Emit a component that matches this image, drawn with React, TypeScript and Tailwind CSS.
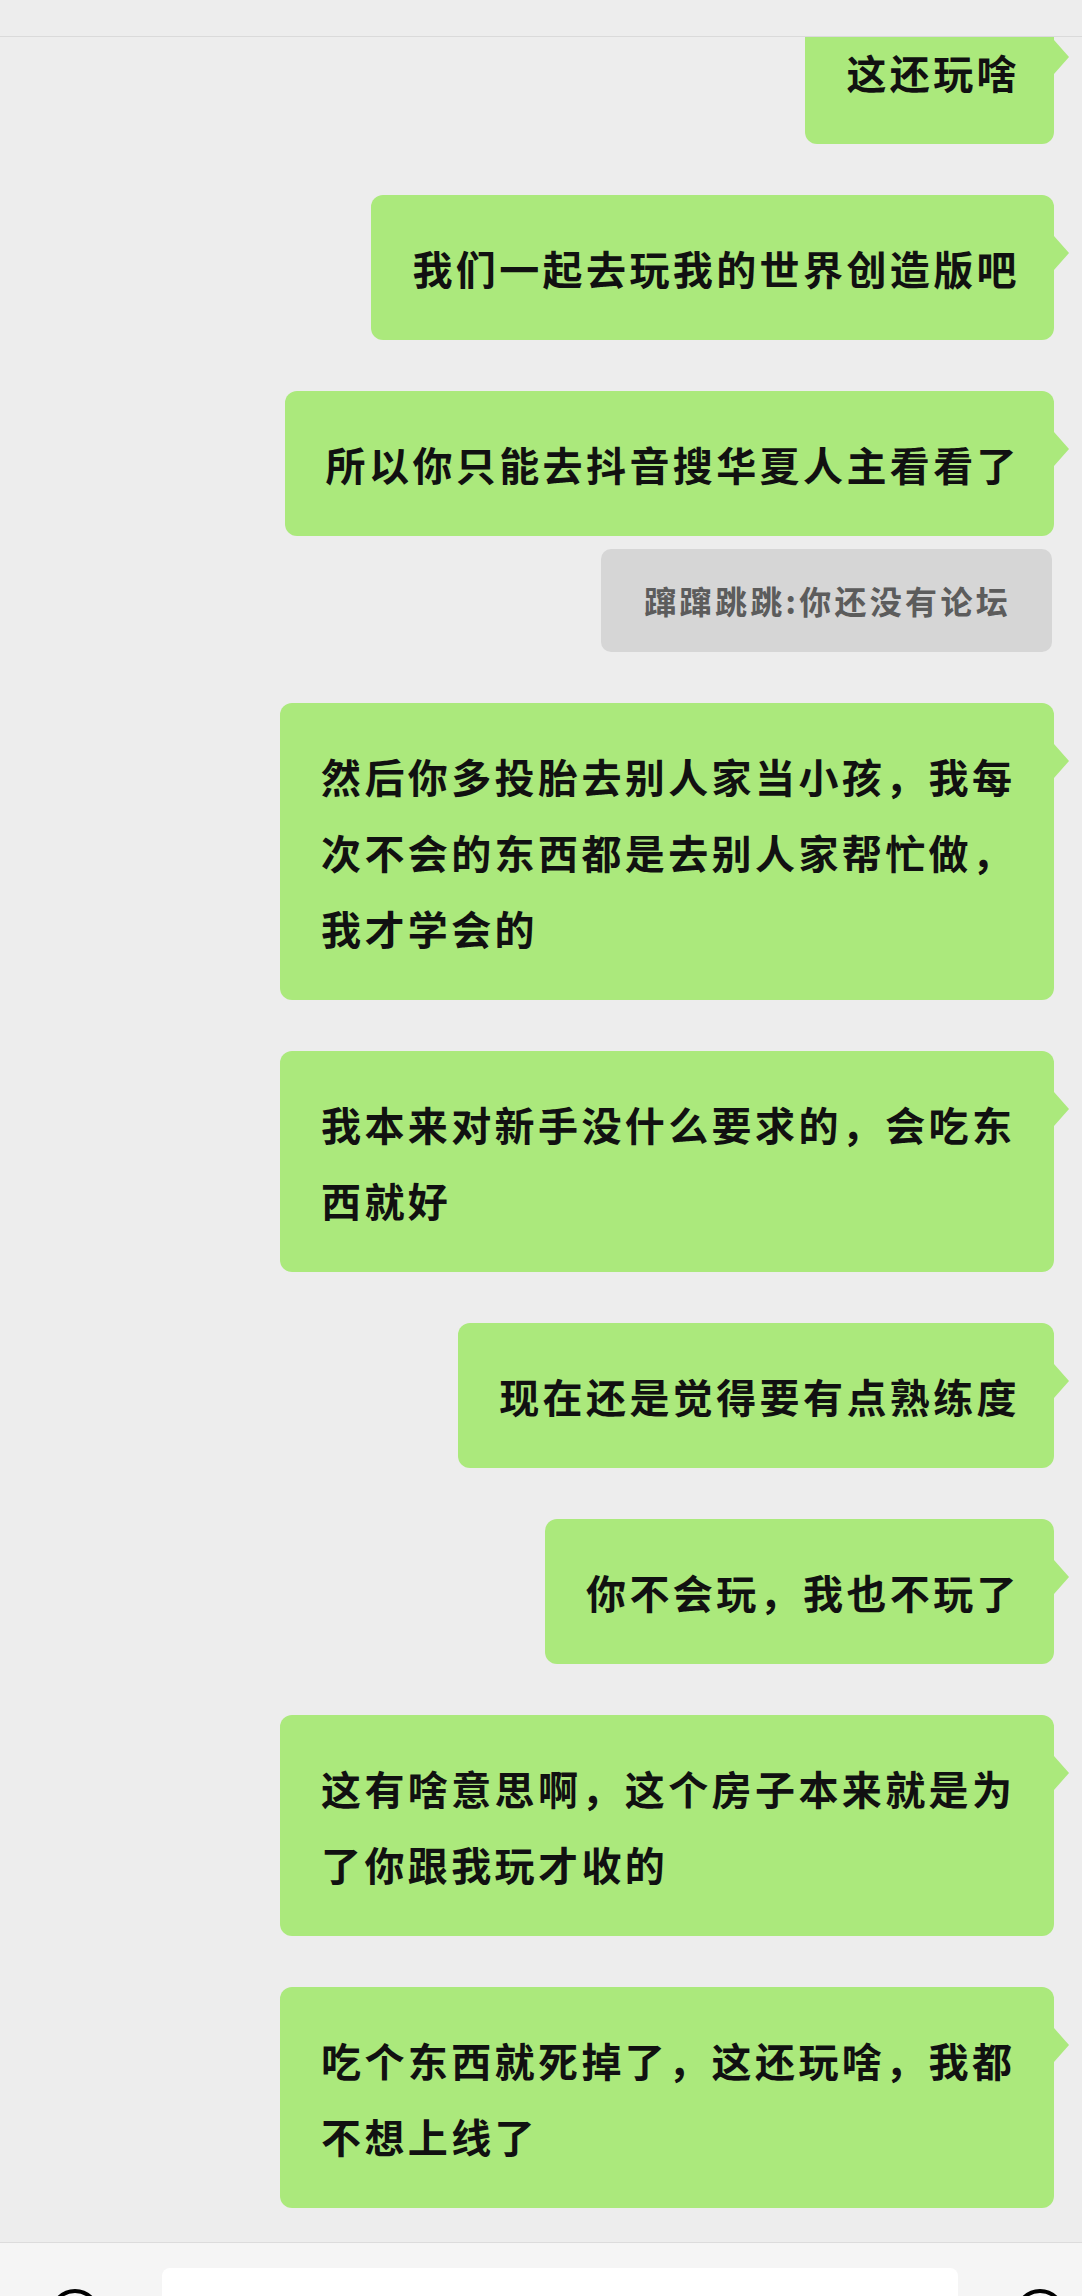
const messages: { kind: "me" | "quote"; text: string }[] = [
  { kind: "me", text: "这还玩啥" },
  { kind: "me", text: "我们一起去玩我的世界创造版吧" },
  { kind: "me", text: "所以你只能去抖音搜华夏人主看看了" },
  { kind: "quote", text: "蹿蹿跳跳:你还没有论坛" },
  { kind: "me", text: "然后你多投胎去别人家当小孩，我每次不会的东西都是去别人家帮忙做，我才学会的" },
  { kind: "me", text: "我本来对新手没什么要求的，会吃东西就好" },
  { kind: "me", text: "现在还是觉得要有点熟练度" },
  { kind: "me", text: "你不会玩，我也不玩了" },
  { kind: "me", text: "这有啥意思啊，这个房子本来就是为了你跟我玩才收的" },
  { kind: "me", text: "吃个东西就死掉了，这还玩啥，我都不想上线了" },
];

function Bubble({ text, first }: { text: string; first: boolean }) {
  return (
    <div
      className={`relative max-w-[774px] bg-[#abe97c] rounded-[12px] pl-[41px] pr-[34px] py-[34.5px] text-[40px] leading-[76px] tracking-[3.4px] font-bold text-[#111] ${
        first ? "-mt-[38px]" : "mt-[51px]"
      }`}
    >
      {text}
      {/* tail */}
      <div className="absolute -right-[15px] top-[41px] w-0 h-0 border-y-[17px] border-y-transparent border-l-[15px] border-l-[#abe97c]" />
    </div>
  );
}

function Quote({ text }: { text: string }) {
  return (
    <div className="mt-[13px] mr-[2px] bg-[#d6d6d6] rounded-[10px] pl-[43px] pr-[41px] py-[24px] text-[32px] leading-[55px] tracking-[3.3px] font-bold text-[#5c5c5c]">
      {text}
    </div>
  );
}

export default function App() {
  return (
    <div className="w-[1082px] h-[2296px] bg-[#ededed] flex flex-col overflow-hidden font-['Noto_Sans_CJK_SC',sans-serif]">
      {/* top bar */}
      <div className="h-[37px] shrink-0 bg-[#ededed] border-b border-[#dadada] relative z-10" />

      {/* messages */}
      <div className="flex-1 overflow-hidden flex flex-col items-end pr-[28px]">
        {messages.map((m, i) =>
          m.kind === "quote" ? (
            <Quote key={i} text={m.text} />
          ) : (
            <Bubble key={i} text={m.text} first={i === 0} />
          )
        )}
      </div>

      {/* input bar */}
      <div className="h-[54px] shrink-0 bg-[#f5f5f5] border-t border-[#dcdcdc] flex items-start">
        <div className="ml-[50px] mt-[46px] w-[50px] h-[50px] shrink-0 rounded-full border-[4px] border-black" />
        <div className="ml-[62px] mt-[25px] w-[796px] h-[80px] shrink-0 bg-white rounded-[8px]" />
        <div className="ml-[57px] mt-[46px] w-[50px] h-[50px] shrink-0 rounded-full border-[4px] border-black" />
      </div>
    </div>
  );
}
